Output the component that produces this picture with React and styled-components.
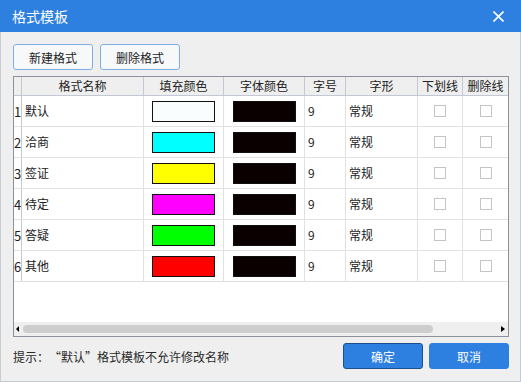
import React from 'react';
import styled, { createGlobalStyle } from 'styled-components';

const COLORS = {
  blue: '#2d80e0',
  chrome: '#efefef',
  frame: '#c6cad3',
  gridLine: '#e1e1e1',
  headLine: '#c2c8d4',
  text: '#222222',
};

const FONT = `"Microsoft YaHei", "Noto Sans CJK SC", "Noto Sans", sans-serif`;

const GlobalStyle = createGlobalStyle`
  html, body {
    margin: 0;
    padding: 0;
    background: #ffffff;
  }
  body {
    font-family: ${FONT};
    color: ${COLORS.text};
  }
`

const Window = styled.div`
  width: 521px;
  height: 382px;
  display: flex;
  flex-direction: column;
  box-sizing: border-box;
`

const TitleBar = styled.div`
  height: 32px;
  flex: none;
  background: ${COLORS.blue};
  display: flex;
  align-items: center;
  justify-content: space-between;
  padding: 0 16px 0 12px;
  color: #ffffff;
  font-size: 14px;
`

const CloseButton = styled.button`
  width: 14px;
  height: 14px;
  padding: 0;
  border: 0;
  background: transparent;
  display: flex;
  align-items: center;
  justify-content: center;
  cursor: pointer;
`

const Body = styled.div`
  flex: 1;
  background: ${COLORS.chrome};
  border: 1px solid ${COLORS.frame};
  border-top: 0;
  padding: 12px 11px 0 12px;
  display: flex;
  flex-direction: column;
`

const Toolbar = styled.div`
  display: flex;
  gap: 7px;
`

const Button = styled.button`
  width: 80px;
  height: 26px;
  box-sizing: border-box;
  border-radius: 3px;
  font-family: ${FONT};
  font-size: 12px;
  padding: 0;
  cursor: pointer;
  border: 1px solid ${({ $primary, $focused }) =>
    $focused ? '#1d4f8f' : $primary ? COLORS.blue : '#7faee6'};
  background: ${({ $primary }) => ($primary ? COLORS.blue : '#f7f8fa')};
  color: ${({ $primary }) => ($primary ? '#ffffff' : COLORS.text)};
`

const Grid = styled.div`
  margin-top: 6px;
  width: 496px;
  height: 261px;
  box-sizing: border-box;
  border: 1px solid #8d9199;
  background: #ffffff;
  display: flex;
  flex-direction: column;
`

const COLUMNS = [8, 122, 80, 81, 41, 72, 45, 45];

const Row = styled.div`
  display: flex;
  height: ${({ $head }) => ($head ? 19 : 31)}px;
  box-sizing: border-box;
  border-bottom: 1px solid ${({ $head }) => ($head ? COLORS.headLine : COLORS.gridLine)};
  background: ${({ $head }) => ($head ? COLORS.chrome : '#ffffff')};
  font-size: 12px;
  flex: none;
`

const Cell = styled.div`
  width: ${({ $w }) => $w}px;
  flex: none;
  box-sizing: border-box;
  display: flex;
  align-items: center;
  justify-content: ${({ $align }) => $align || 'flex-start'};
  padding-left: ${({ $pad }) => $pad || 0}px;
  border-right: ${({ $last, $head }) =>
    $last ? '0' : `1px solid ${$head ? COLORS.headLine : COLORS.gridLine}`};
  white-space: nowrap;
  overflow: hidden;
  line-height: 1;
`

const IndexCell = styled(Cell)`
  background: ${COLORS.chrome};
  justify-content: flex-end;
  font-size: 13px;
  border-right-color: ${COLORS.headLine};
`

const IndexNum = styled.span`
  width: 7px;
  height: 100%;
  background: #ffffff;
  display: flex;
  align-items: center;
  justify-content: center;
`

const Swatch = styled.div`
  width: 63px;
  height: 21px;
  box-sizing: border-box;
  background: ${({ $color }) => $color};
  border: 1px solid #111111;
`

const CheckBox = styled.span`
  width: 12px;
  height: 12px;
  box-sizing: border-box;
  border: 1px solid #c4c4c4;
  background: #ffffff;
`

const Filler = styled.div`
  flex: 1;
`

const ScrollBar = styled.div`
  height: 14px;
  flex: none;
  background: ${COLORS.chrome};
  display: flex;
  align-items: center;
  padding: 0 3px 0 2px;
  gap: 4px;
`

const Arrow = styled.span`
  width: 0;
  height: 0;
  border-top: 3px solid transparent;
  border-bottom: 3px solid transparent;
  ${({ $dir }) =>
    $dir === 'left'
      ? 'border-right: 3px solid #000;'
      : 'border-left: 4px solid #000;'}
`

const Track = styled.div`
  flex: 1;
  height: 100%;
  display: flex;
  align-items: center;
`

const Thumb = styled.div`
  width: 410px;
  height: 8px;
  border-radius: 4px;
  background: #cdcdcd;
`

const Footer = styled.div`
  margin-top: 6px;
  display: flex;
  align-items: center;
  justify-content: space-between;
`

const Hint = styled.span`
  font-size: 12px;
  color: #2a2a2a;
`

/* full-width quote marks, as the CJK system font draws them */
const Quote = styled.span`
  display: inline-block;
  width: 12px;
  text-align: ${({ $open }) => ($open ? 'right' : 'left')};
`

const Actions = styled.div`
  display: flex;
  gap: 6px;
`

const HEADERS = ['格式名称', '填充颜色', '字体颜色', '字号', '字形', '下划线', '删除线'];

const ROWS = [
  { name: '默认', fill: '#f9fdfd' },
  { name: '洽商', fill: '#00ffff' },
  { name: '签证', fill: '#ffff00' },
  { name: '待定', fill: '#ff00ff' },
  { name: '答疑', fill: '#00ff00' },
  { name: '其他', fill: '#ff0000' },
];

const App = () => {
  return (
    <Window>
      <GlobalStyle />
      <TitleBar>
        <span>格式模板</span>
        <CloseButton aria-label="关闭">
          <svg width="11" height="11" viewBox="0 0 11 11">
            <path d="M0.5 0.5 L10.5 10.5 M10.5 0.5 L0.5 10.5" stroke="#fff" strokeWidth="1.6" />
          </svg>
        </CloseButton>
      </TitleBar>
      <Body>
        <Toolbar>
          <Button>新建格式</Button>
          <Button>删除格式</Button>
        </Toolbar>
        <Grid>
          <Row $head>
            <Cell $w={COLUMNS[0]} $head />
            {HEADERS.map((h, i) => (
              <Cell key={h} $w={COLUMNS[i + 1]} $head $align="center" $last={i === HEADERS.length - 1}>
                {h}
              </Cell>
            ))}
          </Row>
          {ROWS.map((r, i) => (
            <Row key={r.name}>
              <IndexCell $w={COLUMNS[0]}>
                <IndexNum>{i + 1}</IndexNum>
              </IndexCell>
              <Cell $w={COLUMNS[1]} $pad={3}>{r.name}</Cell>
              <Cell $w={COLUMNS[2]} $align="center">
                <Swatch $color={r.fill} />
              </Cell>
              <Cell $w={COLUMNS[3]} $align="center">
                <Swatch $color="#0b0000" />
              </Cell>
              <Cell $w={COLUMNS[4]} $pad={3}>9</Cell>
              <Cell $w={COLUMNS[5]} $pad={3}>常规</Cell>
              <Cell $w={COLUMNS[6]} $align="center"><CheckBox /></Cell>
              <Cell $w={COLUMNS[7]} $align="center" $last><CheckBox /></Cell>
            </Row>
          ))}
          <Filler />
          <ScrollBar>
            <Arrow $dir="left" />
            <Track><Thumb /></Track>
            <Arrow $dir="right" />
          </ScrollBar>
        </Grid>
        <Footer>
          <Hint>
            提示：<Quote $open>“</Quote>默认<Quote>”</Quote>格式模板不允许修改名称
          </Hint>
          <Actions>
            <Button $primary $focused>确定</Button>
            <Button $primary>取消</Button>
          </Actions>
        </Footer>
      </Body>
    </Window>
  );
};

export default App;
